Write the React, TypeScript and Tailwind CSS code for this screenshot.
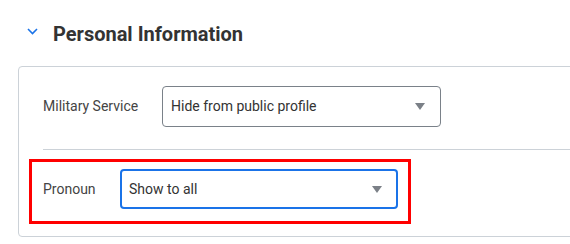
function Select({ value, width, focused }: { value: string; width: string; focused?: boolean }) {
  return (
    <div
      className={`flex items-center justify-between rounded-[4px] bg-white ${width} ${
        focused ? "h-[40px] border-2 border-[#1a73e8] pl-[7px] pr-[14px]" : "h-[41px] border border-[#7a8189] pl-[8px] pr-[15px]"
      }`}
    >
      <span className="text-[14px] text-[#333]">{value}</span>
      <span className="h-0 w-0 border-x-[5.5px] border-t-[7px] border-x-transparent border-t-[#7b8087]" />
    </div>
  );
}

export default function App() {
  return (
    <div className="h-[244px] w-[570px] overflow-hidden bg-white font-['Roboto',sans-serif]">
      <div className="flex items-center pl-[27px] pt-[20px]">
        <svg width="11" height="7" viewBox="0 0 11 7" className="mr-[15px] -mt-[5px]">
          <polyline points="1,1 5.5,5.5 10,1" fill="none" stroke="#1a73e8" strokeWidth="1.6" />
        </svg>
        <h2 className="text-[20px] font-bold leading-[28px] text-[#333]">Personal Information</h2>
      </div>

      <div className="ml-[18px] mt-[18px] h-[171px] w-[600px] rounded-[4px] border border-[#ccd2d8] pl-[24px] pt-[19px]">
        <div className="flex items-center">
          <span className="w-[119px] text-[14px] text-[#444]">Military Service</span>
          <Select value="Hide from public profile" width="w-[279px]" />
        </div>
        <div className="mt-[22px] h-px bg-[#ccd2d8]" />
        <div className="-ml-[14px] mt-[9px] flex h-[65px] w-[382px] items-start border-[3px] border-[#ff0000] pl-[11px] pt-[7px]">
          <span className="mt-[10px] w-[77px] text-[14px] text-[#444]">Pronoun</span>
          <Select value="Show to all" width="w-[278px]" focused />
        </div>
      </div>
    </div>
  );
}
